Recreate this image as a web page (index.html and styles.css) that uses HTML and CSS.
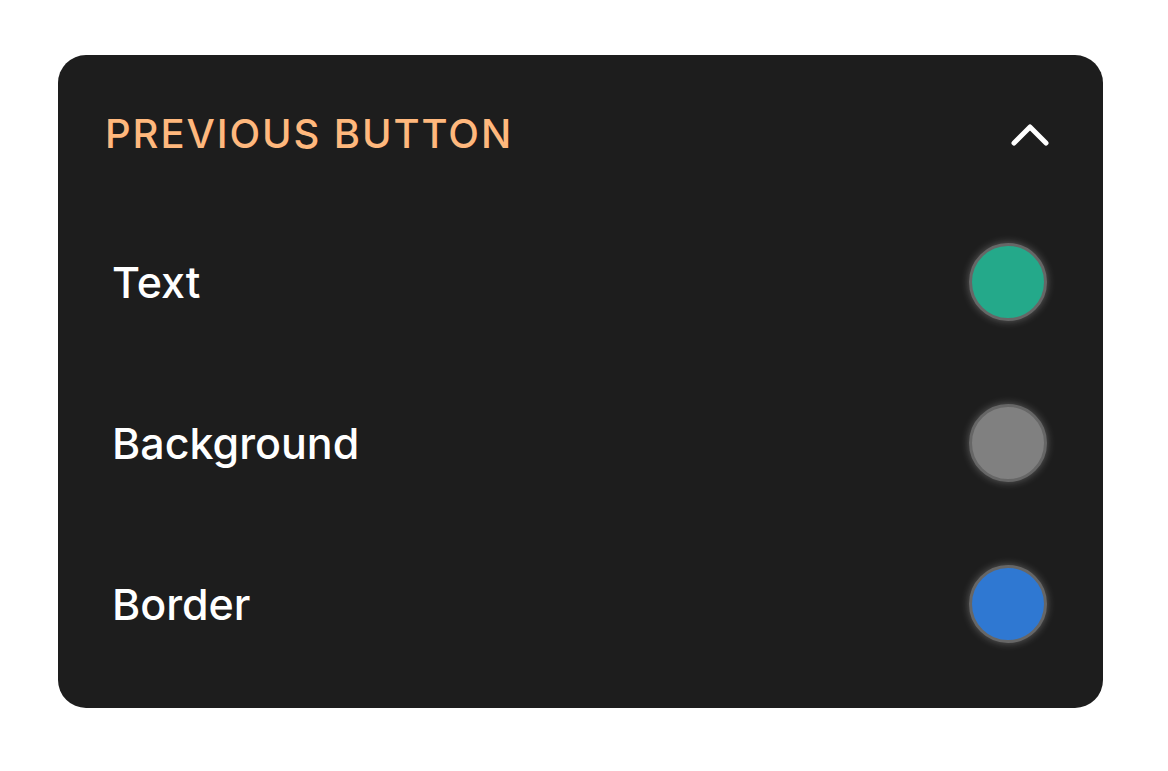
FILE: index.html
```html
<!DOCTYPE html>
<html lang="en">
<head>
    <meta charset="UTF-8">
    <meta name="viewport" content="width=device-width, initial-scale=1.0">
    <title>Previous Button</title>
    <link rel="stylesheet" href="styles.css">
</head>
<body>
    <section class="panel">
        <header class="panel-header">
            <h2 class="panel-title">Previous Button</h2>
            <button class="collapse-btn" aria-label="Collapse">
                <svg width="38" height="24" viewBox="0 0 38 24">
                    <path d="M3 21 L19 5 L35 21" fill="none" stroke="#ffffff" stroke-width="5" stroke-linecap="round" stroke-linejoin="round"/>
                </svg>
            </button>
        </header>

        <div class="color-row">
            <span class="color-label">Text</span>
            <span class="swatch swatch-text"></span>
        </div>
        <div class="color-row">
            <span class="color-label">Background</span>
            <span class="swatch swatch-bg"></span>
        </div>
        <div class="color-row">
            <span class="color-label">Border</span>
            <span class="swatch swatch-border"></span>
        </div>
    </section>
</body>
</html>
```

FILE: styles.css
```css
body {
    margin: 0;
    padding: 55px 65px 63px 58px;
    background-color: white;
    font-family: Inter, "Noto Sans", sans-serif;
}

.panel {
    height: 653px;
    box-sizing: border-box;
    background: #1d1d1d;
    border-radius: 28px;
    padding: 0 56px 24px 54px;
}

.panel-header {
    display: flex;
    align-items: center;
    justify-content: space-between;
    height: 146px;
    padding-top: 11px;
    box-sizing: border-box;
    margin-left: -7px;
}

.panel-title {
    margin: 0;
    font-size: 40px;
    font-weight: 500;
    letter-spacing: 1.9px;
    text-transform: uppercase;
    color: #ffb87d;
}

.collapse-btn {
    background: none;
    border: none;
    padding: 0;
    margin-right: -2px;
    cursor: pointer;
    display: flex;
}

.color-row {
    display: flex;
    align-items: center;
    justify-content: space-between;
    height: 161px;
}

.color-label {
    font-size: 43px;
    font-weight: 450;
    color: #ffffff;
}

.swatch {
    width: 72px;
    height: 72px;
    border-radius: 50%;
    border: 3px solid #666666;
    box-shadow: 0 0 8px rgba(255, 255, 255, 0.3);
}

.swatch-text {
    background: #24a98a;
}

.swatch-bg {
    background: #808080;
}

.swatch-border {
    background: #2f78d2;
}
```
